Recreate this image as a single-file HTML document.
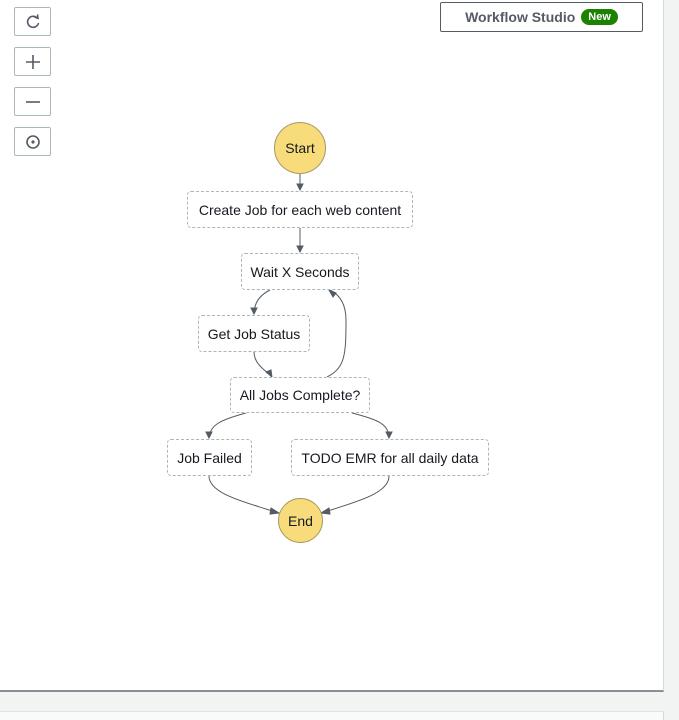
<!DOCTYPE html>
<html><head><meta charset="utf-8"><style>
body{margin:0;width:679px;height:719px;overflow:hidden;background:#f2f3f3;font-family:"Liberation Sans",sans-serif;position:relative}
.panel{position:absolute;left:0;top:0;width:663px;height:690px;background:#fff;border-right:1px solid #d5dbdb;border-bottom:2px solid #879196}
.bot{position:absolute;left:0;top:711px;width:663px;height:8px;background:#fafafa;border-top:1px solid #e1e4e4;border-right:1px solid #d5dbdb}
.btn{position:absolute;left:14px;width:37px;height:29px;border:1px solid #aab7b8;border-radius:2px;box-sizing:border-box;background:#fff}
.wf{position:absolute;left:440px;top:2px;width:203px;height:30px;border:1px solid #545b64;border-radius:2px;box-sizing:border-box;display:flex;align-items:center;justify-content:center;font-weight:bold;font-size:14px;color:#545b64}
.new{background:#1d8102;color:#fff;border-radius:10px;font-size:11px;padding:2px 7px;margin-left:6px}
.n{position:absolute;box-sizing:border-box;border:1px dashed #aab7b8;border-radius:4px;background:#fff;font-size:14px;color:#16191f;display:flex;align-items:center;justify-content:center;white-space:nowrap}
.c{position:absolute;box-sizing:border-box;border:1px solid #a89860;border-radius:50%;background:#f8dc7c;font-size:14px;color:#16191f;display:flex;align-items:center;justify-content:center}
svg{position:absolute;left:0;top:0}
</style></head><body>
<div class="panel"></div>
<div class="bot"></div>
<div class="btn" style="top:7px"><svg width="36" height="28"><path d="M22.5 10.5 A5.5 5.5 0 1 0 23.5 15" fill="none" stroke="#545b64" stroke-width="1.6"/><path d="M19.5 9 L23 10.3 L22.5 6.5" fill="none" stroke="#545b64" stroke-width="1.6"/></svg></div>
<div class="btn" style="top:47px"><svg width="36" height="28"><path d="M18 7v14M11 14h14" stroke="#545b64" stroke-width="1.6"/></svg></div>
<div class="btn" style="top:87px"><svg width="36" height="28"><path d="M11 14h14" stroke="#545b64" stroke-width="1.6"/></svg></div>
<div class="btn" style="top:127px"><svg width="36" height="28"><circle cx="18" cy="14" r="6" fill="none" stroke="#545b64" stroke-width="1.6"/><circle cx="18" cy="14" r="1.6" fill="#545b64"/></svg></div>
<div class="wf">Workflow Studio<span class="new">New</span></div>
<svg width="679" height="719">
<g fill="none" stroke="#545b64" stroke-width="1">
<path d="M300 174V190"/><path d="M297 184L300 190L303 184Z" fill="#545b64"/>
<path d="M300 228V252"/><path d="M297 246L300 252L303 246Z" fill="#545b64"/>
<path d="M270 290C260 295 254 303 254 314"/><path d="M251 308L254 314L257 308Z" fill="#545b64"/>
<path d="M254 352C254 365 268 372 271 376"/><path d="M266 372L272 377L271 370Z" fill="#545b64"/>
<path d="M327 377C345 368 346 355 346 320C346 305 340 295 330 290"/><path d="M329 290L336 293L333 297Z" fill="#545b64"/>
<path d="M246 413C220 420 210 425 209 438"/><path d="M206 432L209 438L212 432Z" fill="#545b64"/>
<path d="M352 413C380 420 389 425 389 438"/><path d="M386 432L389 438L392 432Z" fill="#545b64"/>
<path d="M209 476C209 495 250 503 278 513"/><path d="M271 508L279 513L270 514Z" fill="#545b64"/>
<path d="M389 476C389 495 350 503 322 513"/><path d="M329 508L321 513L330 514Z" fill="#545b64"/>
</g></svg>
<div class="c" style="left:274px;top:122px;width:52px;height:52px">Start</div>
<div class="n" style="left:187px;top:191px;width:226px;height:37px">Create Job for each web content</div>
<div class="n" style="left:241px;top:253px;width:118px;height:37px">Wait X Seconds</div>
<div class="n" style="left:198px;top:315px;width:112px;height:37px">Get Job Status</div>
<div class="n" style="left:230px;top:377px;width:140px;height:36px">All Jobs Complete?</div>
<div class="n" style="left:167px;top:439px;width:85px;height:37px">Job Failed</div>
<div class="n" style="left:291px;top:439px;width:198px;height:37px">TODO EMR for all daily data</div>
<div class="c" style="left:278px;top:498px;width:45px;height:45px">End</div>
</body></html>
